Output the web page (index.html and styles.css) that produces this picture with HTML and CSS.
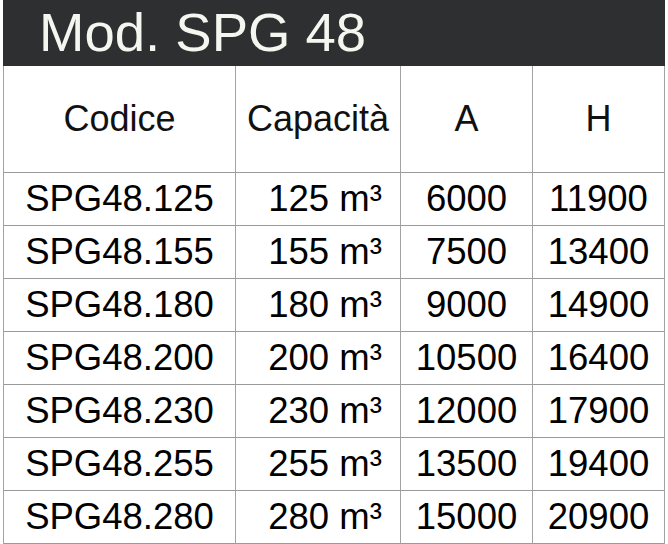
FILE: index.html
```html
<!DOCTYPE html>
<html lang="it">
<head>
<meta charset="utf-8">
<title>Mod. SPG 48</title>
<link rel="stylesheet" href="styles.css">
</head>
<body>
<div class="sheet">
  <div class="title">Mod. SPG 48</div>
  <div class="grid">
    <div class="cell head">Codice</div>
    <div class="cell head">Capacità</div>
    <div class="cell head">A</div>
    <div class="cell head">H</div>

    <div class="cell">SPG48.125</div><div class="cell cap">125 m³</div><div class="cell">6000</div><div class="cell">11900</div>
    <div class="cell">SPG48.155</div><div class="cell cap">155 m³</div><div class="cell">7500</div><div class="cell">13400</div>
    <div class="cell">SPG48.180</div><div class="cell cap">180 m³</div><div class="cell">9000</div><div class="cell">14900</div>
    <div class="cell">SPG48.200</div><div class="cell cap">200 m³</div><div class="cell">10500</div><div class="cell">16400</div>
    <div class="cell">SPG48.230</div><div class="cell cap">230 m³</div><div class="cell">12000</div><div class="cell">17900</div>
    <div class="cell">SPG48.255</div><div class="cell cap">255 m³</div><div class="cell">13500</div><div class="cell">19400</div>
    <div class="cell">SPG48.280</div><div class="cell cap">280 m³</div><div class="cell">15000</div><div class="cell">20900</div>
  </div>
</div>
</body>
</html>
```

FILE: styles.css
```css
html, body {
  margin: 0;
  padding: 0;
  background: #ffffff;
}

body {
  font-family: "Liberation Sans", Arial, sans-serif;
  color: #000000;
}

.sheet {
  width: 662px;
  margin-left: 3px;
}

.title {
  height: 66px;
  line-height: 66px;
  background: #2e2f31;
  color: #f4f6f0;
  font-size: 54.5px;
  padding-left: 36px;
  white-space: nowrap;
}

.grid {
  display: grid;
  grid-template-columns: 232px 165px 132px 132px;
  grid-template-rows: 107px repeat(7, 53px);
  border-left: 1px solid #a3a3a3;
}

.cell {
  box-sizing: border-box;
  border-right: 1px solid #a3a3a3;
  border-bottom: 1px solid #9a9a9a;
  display: flex;
  align-items: center;
  justify-content: center;
  font-size: 36.5px;
  white-space: nowrap;
}

.cell.cap {
  padding-left: 14px;
}

.cell.head {
  font-size: 36px;
  color: #111111;
}
```
